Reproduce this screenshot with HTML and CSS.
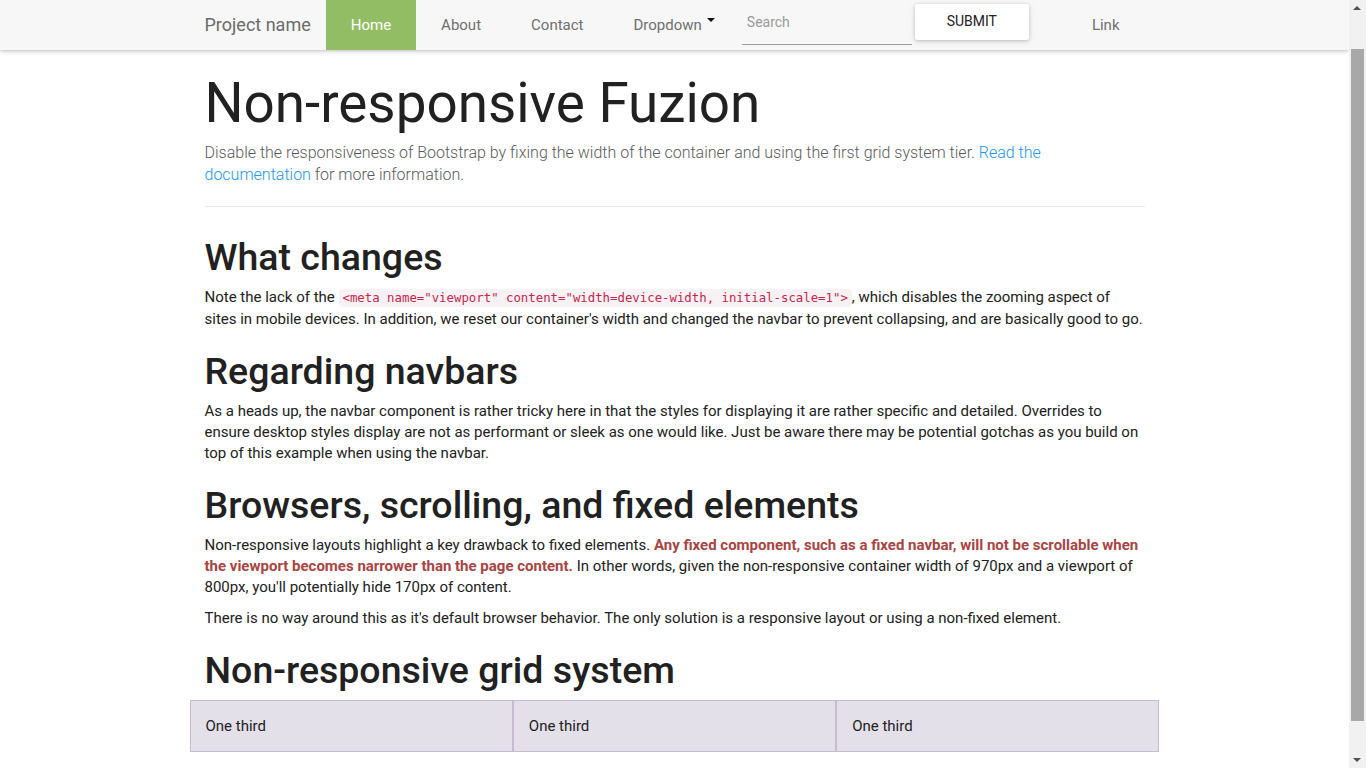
FILE: index.html
```html
<!DOCTYPE html>
<html lang="en">
<head>
<meta charset="utf-8">
<title>Non-responsive Fuzion</title>
<link rel="stylesheet" href="styles.css">
</head>
<body>
<nav class="navbar">
  <div class="container nav-inner">
    <a class="brand" href="#">Project name</a>
    <ul class="nav">
      <li class="active"><a href="#">Home</a></li>
      <li><a href="#">About</a></li>
      <li><a href="#">Contact</a></li>
      <li><a href="#">Dropdown<span class="caret"></span></a></li>
    </ul>
    <form class="search-form">
      <input class="search" type="text" placeholder="Search">
      <button class="submit" type="button">Submit</button>
    </form>
    <ul class="nav nav-right">
      <li><a href="#">Link</a></li>
    </ul>
  </div>
</nav>
<div class="container main">
  <h1>Non-responsive Fuzion</h1>
  <p class="lead">Disable the responsiveness of Bootstrap by fixing the width of the container and using the first grid system tier. <a href="#">Read the documentation</a> for more information.</p>
  <hr>
  <h2>What changes</h2>
  <p>Note the lack of the <code>&lt;meta name="viewport" content="width=device-width, initial-scale=1"&gt;</code>, which disables the zooming aspect of sites in mobile devices. In addition, we reset our container's width and changed the navbar to prevent collapsing, and are basically good to go.</p>
  <h2>Regarding navbars</h2>
  <p>As a heads up, the navbar component is rather tricky here in that the styles for displaying it are rather specific and detailed. Overrides to ensure desktop styles display are not as performant or sleek as one would like. Just be aware there may be potential gotchas as you build on top of this example when using the navbar.</p>
  <h2>Browsers, scrolling, and fixed elements</h2>
  <p>Non-responsive layouts highlight a key drawback to fixed elements. <strong class="danger">Any fixed component, such as a fixed navbar, will not be scrollable when the viewport becomes narrower than the page content.</strong> In other words, given the non-responsive container width of 970px and a viewport of 800px, you'll potentially hide 170px of content.</p>
  <p>There is no way around this as it's default browser behavior. The only solution is a responsive layout or using a non-fixed element.</p>
  <h2>Non-responsive grid system</h2>
  <div class="row">
    <div class="col">One third</div>
    <div class="col">One third</div>
    <div class="col">One third</div>
  </div>
</div>
<div class="scrollbar" aria-hidden="true">
  <span class="arrow-up"></span>
  <span class="thumb"></span>
  <span class="arrow-down"></span>
</div>
</body>
</html>
```
FILE: styles.css
```css
html, body {
  margin: 0;
  padding: 0;
}
body {
  margin-right: 17px;
  font-family: Roboto, "Liberation Sans", sans-serif;
  font-size: 15px;
  line-height: 21px;
  color: #212121;
  background: #fff;
}
a {
  color: #2196f3;
  text-decoration: none;
}
.container {
  width: 970px;
  margin: 0 auto;
  padding: 0 15px;
  box-sizing: border-box;
}
.navbar {
  height: 50px;
  background: #f7f7f7;
  box-shadow: 0 1px 6px rgba(0,0,0,.16), 0 1px 3px rgba(0,0,0,.12);
  position: relative;
  z-index: 2;
}
.nav-inner {
  display: flex;
  align-items: stretch;
  height: 50px;
}
.brand {
  margin-left: -15px;
  padding: 0 15px;
  font-size: 18px;
  line-height: 50px;
  color: #6b6b6b;
}
.nav {
  list-style: none;
  margin: 0;
  padding: 0;
  display: flex;
}
.nav li a {
  display: block;
  padding: 0 25px;
  line-height: 50px;
  font-size: 15px;
  color: #707070;
}
.nav li.active a {
  background: #93bd65;
  color: #fff;
}
.caret {
  display: inline-block;
  width: 0;
  height: 0;
  margin-left: 5px;
  vertical-align: 8px;
  border-top: 4px solid #111;
  border-left: 4px solid transparent;
  border-right: 4px solid transparent;
}
.search-form {
  display: flex;
  align-items: flex-start;
  margin-left: 2px;
}
.search {
  width: 170px;
  height: 39px;
  margin-top: 6px;
  box-sizing: border-box;
  border: 0;
  border-bottom: 1px solid #9e9e9e;
  background: transparent;
  padding: 0 5px 7px;
  font-family: Roboto, "Liberation Sans", sans-serif;
  font-size: 14px;
  color: #333;
  outline: none;
}
.search::placeholder {
  color: #9a9a9a;
}
.submit {
  margin: 4px 0 0 3px;
  width: 114px;
  height: 36px;
  border: 0;
  border-radius: 2px;
  background: #fff;
  box-shadow: 0 1px 6px rgba(0,0,0,.14), 0 1px 3px rgba(0,0,0,.14);
  font-family: Roboto, "Liberation Sans", sans-serif;
  font-size: 14px;
  text-transform: uppercase;
  color: #222;
  padding: 0 0 2px;
}
.nav-right {
  margin-left: auto;
}
h1 {
  font-size: 54.8px;
  font-weight: 400;
  line-height: 60px;
  margin: 23px 0 9px;
}
.lead {
  font-size: 16px;
  font-weight: 300;
  line-height: 22px;
  color: #5a5a5a;
  margin: 0;
}
hr {
  border: 0;
  border-top: 1px solid #eaeaea;
  margin: 20px 0 31px;
}
h2 {
  font-size: 37.5px;
  font-weight: 500;
  line-height: 39px;
  margin: 22px 0 10px;
}
p {
  margin: 0 0 10px;
}
code {
  font-family: "DejaVu Sans Mono", "Liberation Mono", monospace;
  font-size: 12.35px;
  color: #c7254e;
  background: #f9f2f4;
  padding: 2px 4px;
  border-radius: 4px;
}
.danger {
  color: #a94442;
}
.row {
  display: flex;
  margin: 0 -15px 80px;
}
.col {
  flex: 1;
  padding: 15px;
  line-height: 20px;
  background: rgba(86,61,124,.16);
  border: 1px solid rgba(86,61,124,.22);
}
.scrollbar {
  position: fixed;
  top: 0;
  right: 0;
  width: 17px;
  height: 100vh;
  background: #f1f1f1;
  z-index: 5;
}
.arrow-up, .arrow-down {
  position: absolute;
  left: 4px;
  width: 0;
  height: 0;
  border-left: 4px solid transparent;
  border-right: 4px solid transparent;
}
.arrow-up {
  top: 6px;
  border-bottom: 4px solid #505050;
}
.arrow-down {
  bottom: 6px;
  border-top: 4px solid #505050;
}
.thumb {
  position: absolute;
  left: 2px;
  right: 2px;
  top: 49px;
  height: 672px;
  background: #a8a8a8;
}
```
